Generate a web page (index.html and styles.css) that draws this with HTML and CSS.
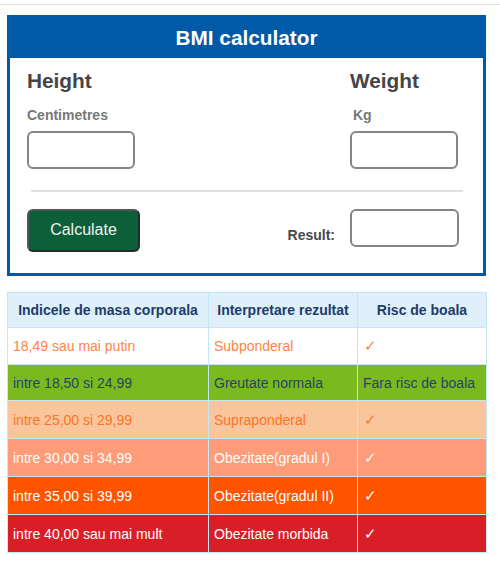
FILE: index.html
```html
<!DOCTYPE html>
<html lang="ro">
<head>
<meta charset="utf-8">
<title>BMI calculator</title>
<link rel="stylesheet" href="styles.css">
</head>
<body>
<div class="topline"></div>
<div class="calc">
  <div class="calc-head">BMI calculator</div>
  <div class="calc-body">
    <div class="fields">
      <div class="field">
        <div class="field-title">Height</div>
        <div class="field-unit">Centimetres</div>
        <input class="box" type="text">
      </div>
      <div class="field">
        <div class="field-title">Weight</div>
        <div class="field-unit unit-kg">Kg</div>
        <input class="box" type="text">
      </div>
    </div>
    <div class="divider"></div>
    <div class="actions">
      <button class="btn" type="button">Calculate</button>
      <span class="result-label">Result:</span>
      <input class="box box-result" type="text">
    </div>
  </div>
</div>

<table class="bmi">
  <colgroup>
    <col class="c1"><col class="c2"><col class="c3">
  </colgroup>
  <thead>
    <tr><th>Indicele de masa corporala</th><th>Interpretare rezultat</th><th>Risc de boala</th></tr>
  </thead>
  <tbody>
    <tr class="r1"><td>18,49 sau mai putin</td><td>Subponderal</td><td class="check">&#10003;</td></tr>
    <tr class="r2"><td>intre 18,50 si 24,99</td><td>Greutate normala</td><td>Fara risc de boala</td></tr>
    <tr class="r3"><td>intre 25,00 si 29,99</td><td>Supraponderal</td><td class="check">&#10003;</td></tr>
    <tr class="r4"><td>intre 30,00 si 34,99</td><td>Obezitate(gradul I)</td><td class="check">&#10003;</td></tr>
    <tr class="r5"><td>intre 35,00 si 39,99</td><td>Obezitate(gradul II)</td><td class="check">&#10003;</td></tr>
    <tr class="r6"><td>intre 40,00 sau mai mult</td><td>Obezitate morbida</td><td class="check">&#10003;</td></tr>
  </tbody>
</table>
</body>
</html>
```

FILE: styles.css
```css
* { box-sizing: border-box; }

body {
  margin: 0;
  padding: 4px 0 0;
  font-family: "Liberation Sans", Arial, sans-serif;
  background: #fff;
}

.topline {
  height: 1px;
  background: #e2e2e4;
}

.calc {
  width: 479px;
  margin: 10px 0 0 7px;
  border: 3px solid #005aa7;
}

.calc-head {
  margin-top: -3px;
  padding-top: 3px;
  height: 43px;
  line-height: 40px;
  background: #005aa7;
  color: #fff;
  font-weight: bold;
  font-size: 20.8px;
  text-align: center;
}

.calc-body {
  padding: 11px 24px 21px 17px;
}

.fields {
  display: grid;
  grid-template-columns: 1fr 109px;
}

.field-title {
  font-size: 20.8px;
  font-weight: bold;
  line-height: 24px;
  color: #454548;
}

.field-unit {
  margin-top: 14px;
  font-size: 14px;
  font-weight: bold;
  line-height: 16px;
  color: #787878;
}

.unit-kg { padding-left: 3px; }

.box {
  display: block;
  width: 108px;
  height: 38px;
  margin-top: 8px;
  border: 2px solid #858585;
  border-radius: 6px;
  background: #fff;
  font: inherit;
}

.divider {
  height: 2px;
  margin: 21px -4px 0 4px;
  background: #dedede;
}

.actions {
  display: flex;
  align-items: flex-start;
  margin-top: 17px;
}

.btn {
  width: 113px;
  height: 43px;
  border: 2px solid #2a2a2a;
  border-top-color: #555;
  border-left-color: #555;
  border-radius: 6px;
  background: #0b5f39;
  color: #f2f2f2;
  font-family: "Liberation Sans", Arial, sans-serif;
  font-size: 16px;
  padding: 0 0 2px;
}

.result-label {
  margin: 18px 15px 0 auto;
  font-size: 14px;
  font-weight: bold;
  line-height: 16px;
  color: #48484c;
}

.box-result {
  width: 109px;
  margin-top: 0;
}

.bmi {
  margin: 16px 0 0 7px;
  width: 479px;
  border-collapse: collapse;
  table-layout: fixed;
  font-size: 14px;
}

.c1 { width: 201px; }
.c2 { width: 149px; }
.c3 { width: 129px; }

.bmi th,
.bmi td {
  border: 1px solid #c3e7f6;
  padding: 0 5px;
  text-align: left;
  vertical-align: middle;
  white-space: nowrap;
}

.bmi th {
  height: 35px;
  background: #dff0fa;
  color: #1d3c6b;
  text-align: center;
  font-weight: bold;
}

.bmi td { height: 37px; }

.bmi td.check {
  font-family: "DejaVu Sans", sans-serif;
  font-size: 15px;
  font-weight: 200;
  padding-left: 6px;
}

.r1 td { background: #fff; color: #ff8446; }
.r2 td { background: #7aba1e; color: #26426a; height: 36px; }
.r3 td { background: #f8c59c; color: #ff7424; height: 38px; }
.r4 td { background: #fe9b78; color: #fff; height: 38px; }
.r5 td { background: #fe5400; color: #fff; height: 38px; }
.r6 td { background: #d81f27; color: #fff; height: 38px; }
```
